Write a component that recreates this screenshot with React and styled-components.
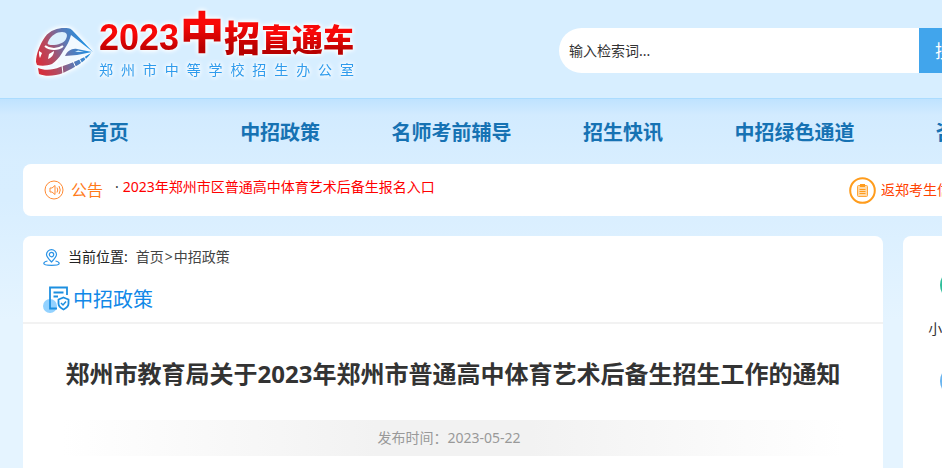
import React, { useState } from 'react';
import styled, { createGlobalStyle } from 'styled-components'

const navItems = ['首页', '中招政策', '名师考前辅导', '招生快讯', '中招绿色通道', '咨询台']

const services = [
    { name: '小学招生', color: '#2fbf9b' },
    { name: '初中', color: '#6ab5f0' },
]

const TrainIcon = () => (
    <svg width="58" height="52" viewBox="0 0 58 52" aria-hidden="true">
        <defs>
            <linearGradient id="train" gradientUnits="userSpaceOnUse" x1="2" y1="38" x2="50" y2="20">
                <stop offset="0" stopColor="#d62f3c" />
                <stop offset="0.3" stopColor="#b54a60" />
                <stop offset="0.65" stopColor="#5d78b4" />
                <stop offset="1" stopColor="#2590e0" />
            </linearGradient>
        </defs>
        <path d="M33 4L56 26L31 38L20 40Z" fill="#f2f9ff" />
        <path
            d="M0 36C0 28 4 18 9 11C14 4 22 2 28 2C31 2 34 2 36 4L57 26L35 9C33 17 29 22 26 27C23 32 20 35 16 38C11 40 5 40 1 39Z"
            fill="url(#train)"
        />
        <path d="M12 16C15 9 21 6 26 6C31 6 32 9 30 13C28 17 22 19 16 19C12 19 11 18 12 16Z" fill="#dceffd" />
        <path d="M9 20C14 24 22 24 27 20" fill="none" stroke="#fff" strokeWidth="2" />
        <path d="M3 25L6 27L4 32C3 30 3 28 3 25ZM13 28L18 25C18 29 15 32 12 33Z" fill="#fff" />
        <path d="M29 30C31 25 36 22 41 23L56 26L41 29Z" fill="url(#train)" />
        <path d="M39 26L48 26L42 24.500Z" fill="#d5ecfc" />
        <path d="M2 42C9 45 17 44 24 41C36 37 46 33 55 27C49 36 38 42 27 47C19 50 10 51 3 48Z" fill="url(#train)" />
        <path d="M26 39L27 48M37 35L40 42M43 32L46 38M48 30L50 34" stroke="#fff" strokeWidth="1" />
    </svg>
)

const SpeakerIcon = () => (
    <svg width="20" height="20" viewBox="0 0 20 20" fill="none" stroke="#ff8a33" aria-hidden="true">
        <circle cx="10" cy="10" r="9" />
        <path d="M6 8H8L11 5.500V14.500L8 12H6Z" />
        <path d="M13 7.500Q14.500 10 13 12.500M15 6Q17.500 10 15 14" />
    </svg>
)

const ClipboardIcon = () => (
    <svg width="27" height="27" viewBox="0 0 27 27" fill="none" aria-hidden="true">
        <circle cx="13.5" cy="13.5" r="12.3" stroke="#ff9c1c" strokeWidth="2" />
        <rect x="8.500" y="8.500" width="10" height="11" rx="1" fill="#ffd9a8" stroke="#ffa63a" />
        <rect x="11" y="7" width="5" height="3" fill="#ff9c1c" />
        <path d="M10.500 12.500H16.500M10.500 14.500H16.500M10.500 16.500H16.500" stroke="#ff9c1c" />
    </svg>
)

const PinIcon = () => (
    <svg width="17" height="17" viewBox="0 0 17 17" fill="none" stroke="#2b93e6" strokeWidth="1.2" aria-hidden="true">
        <path d="M8.500 13C5.500 10 3.500 8 3.500 5.600A5 5 0 0 1 13.500 5.600C13.500 8 11.500 10 8.500 13Z" />
        <circle cx="8.500" cy="5.600" r="2.200" />
        <path d="M4.500 12C2 12.500 0.800 13.500 0.800 14.500C0.800 16 4 16.300 8.500 16.300S16.200 16 16.200 14.500C16.200 13.500 15 12.500 12.500 12" />
    </svg>
)

const PolicyIcon = () => (
    <svg width="28" height="28" viewBox="0 0 28 28" fill="none" stroke="#1d8fe0" strokeWidth="1.800" aria-hidden="true">
        <circle cx="7" cy="20" r="7" fill="#93d2ff" stroke="none" />
        <path d="M14 22.500H7V1.500H24V9" />
        <path d="M10.500 6.500H20.500M10.500 10.500H15" />
        <path d="M20.500 11.500L25.500 13.500V17.500C25.500 20.500 23.500 22 20.500 23.500C17.500 22 15.500 20.500 15.500 17.500V13.500Z" />
        <path d="M18 17L20 19L23 15.500" strokeWidth="1.500" />
    </svg>
)

const App = () => {
    const [keyword, setKeyword] = useState('输入检索词...')

    return (
        <Page>
            <GlobalStyle />
            <Header>
                <Container>
                    <Brand href="#">
                        <TrainIcon />
                        <BrandWords>
                            <BrandTitle>
                                <Year>2023</Year>
                                <Brush><big>中</big>招</Brush>
                                <Express>直通车</Express>
                            </BrandTitle>
                            <BrandOffice>郑州市中等学校招生办公室</BrandOffice>
                        </BrandWords>
                    </Brand>
                    <SearchForm onSubmit={(e) => e.preventDefault()}>
                        <SearchInput
                            aria-label="输入检索词"
                            value={keyword}
                            onChange={(e) => setKeyword(e.target.value)}
                        />
                        <SearchButton type="submit">搜索</SearchButton>
                    </SearchForm>
                </Container>
            </Header>
            <NavBar>
                <NavList>
                    {navItems.map((item) => (
                        <NavLink href="#" key={item}>{item}</NavLink>
                    ))}
                </NavList>
            </NavBar>
            <Notice>
                <NoticeLabel><SpeakerIcon />公告</NoticeLabel>
                <NoticeItem>·<a href="#">2023年郑州市区普通高中体育艺术后备生报名入口</a></NoticeItem>
                <ReturnLink href="#"><ClipboardIcon />返郑考生信息</ReturnLink>
            </Notice>
            <Content>
                <Main>
                    <Breadcrumb>
                        <PinIcon />
                        <span>当前位置:</span>
                        <Trail><a href="#">首页</a>&gt;<a href="#">中招政策</a></Trail>
                    </Breadcrumb>
                    <SectionTitle><PolicyIcon />中招政策</SectionTitle>
                    <Article>
                        <h1>郑州市教育局关于2023年郑州市普通高中体育艺术后备生招生工作的通知</h1>
                        <Meta>发布时间：2023-05-22</Meta>
                    </Article>
                </Main>
                <Sidebar>
                    {services.map((item) => (
                        <Service href="#" key={item.name}>
                            <ServiceDot $color={item.color} />
                            {item.name}
                        </Service>
                    ))}
                </Sidebar>
            </Content>
        </Page>
    )
}

const GlobalStyle = createGlobalStyle`
    * {
        box-sizing: border-box;
    }

    body {
        margin: 0;
        font: 14px/20px "Noto Sans", "Noto Sans CJK SC", sans-serif;
        color: #333;
    }

    a {
        color: inherit;
        text-decoration: none;
    }
`

const Page = styled.div`
    display: flex;
    flex-direction: column;
    min-height: 100vh;
    overflow: hidden;
    background: linear-gradient(#d6edff, #d8eeff 200px, #e5f4ff 320px);
`

const Header = styled.header`
    height: 99px;
    padding: 0 23px;
    border-bottom: 1px solid #abdcff;
    background: #d7eeff;
`

const Container = styled.div`
    display: flex;
    min-width: 1200px;
    max-width: 1400px;
    margin: 0 auto;
`

const Brand = styled.a`
    display: flex;
    flex: 0 0 536px;
    gap: 5px;
    padding-left: 13px;
    filter: drop-shadow(0 0 2px #fff) drop-shadow(0 0 2px #fff);

    svg {
        margin-top: 26px;
    }
`

const BrandWords = styled.div`
    width: 255px;
`

const BrandTitle = styled.div`
    display: flex;
    justify-content: space-between;
    height: 60px;
    font-family: "Noto Sans CJK SC", sans-serif;
    font-weight: 900;
    white-space: nowrap;

    span {
        color: transparent;
        background: linear-gradient(#f80808 40%, #b80000 80%);
        background-clip: text;
    }
`

const Year = styled.span`
    margin-top: 16px;
    font: bold 36px/44px "Liberation Sans", sans-serif;
`

const Brush = styled.span`
    display: flex;
    align-items: flex-end;
    height: 60px;
    font-size: 36px;
    line-height: 48px;

    big {
        font-size: 44px;
        line-height: 60px;
    }
`

const Express = styled.span`
    margin-top: 16px;
    font-size: 31px;
    line-height: 44px;
`

const BrandOffice = styled.div`
    font-size: 14px;
    line-height: 20px;
    color: #2f9bec;
    text-align-last: justify;
`

const SearchForm = styled.form`
    display: flex;
    height: 45px;
    margin-top: 28px;
`

const SearchInput = styled.input`
    width: 360px;
    padding: 0 10px;
    border: 0;
    border-radius: 23px 0 0 23px;
    outline: none;
    background: #fff;
    color: #333;
    font: inherit;
`

const SearchButton = styled.button`
    padding: 0 16px;
    border: 0;
    background: #41a5ec;
    color: #fff;
    font: inherit;
    font-size: 18px;
    white-space: nowrap;
    cursor: pointer;
`

const NavBar = styled.nav`
    height: 65px;
    padding: 0 23px;
    background: linear-gradient(#bfe3ff, #d2ebff 16px, #d8eeff);
`

const NavList = styled.div`
    display: grid;
    grid-template-columns: repeat(7, 1fr);
    min-width: 1200px;
    max-width: 1400px;
    margin: 0 auto;
`

const NavLink = styled.a`
    text-align: center;
    font-size: 20px;
    line-height: 68px;
    font-weight: bold;
    color: #1672b3;
`

const Notice = styled(Container)`
    margin: 0 23px 20px;
    height: 52px;
    padding-left: 21px;
    border-radius: 8px;
    background: #fff;
    white-space: nowrap;
`

const NoticeLabel = styled.div`
    display: flex;
    align-items: center;
    gap: 7px;
    font-size: 16px;
    color: #ff7a1a;
`

const NoticeItem = styled.div`
    margin-left: 12px;
    line-height: 46px;

    a {
        margin-left: 4px;
        color: #f00;
    }
`

const ReturnLink = styled.a`
    display: flex;
    flex: 0 0 374px;
    align-items: center;
    gap: 5px;
    margin-left: auto;
    color: #ff4200;
`

const Content = styled(Container)`
    flex: 1;
    gap: 20px;
    margin: 0 23px;
`

const Main = styled.main`
    flex: 1;
    border-radius: 8px 8px 0 0;
    background: #fff;
`

const Breadcrumb = styled.div`
    display: flex;
    align-items: center;
    gap: 8px;
    height: 42px;
    padding: 0 20px;
    color: #222;
`

const Trail = styled.div`
    display: flex;
    gap: 1px;
    color: #444;
`

const SectionTitle = styled.h2`
    display: flex;
    align-items: center;
    gap: 2px;
    height: 46px;
    margin: 0;
    padding: 0 20px;
    border-bottom: 2px solid #f2f2f2;
    font-size: 20px;
    font-weight: normal;
    color: #1188e8;
`

const Article = styled.article`
    padding: 30px 40px;
    text-align: center;

    h1 {
        margin: 0 0 26px;
        font-size: 24px;
        line-height: 40px;
        white-space: nowrap;
    }
`

const Meta = styled.div`
    padding-right: 8px;
    line-height: 36px;
    color: #999;
    background: linear-gradient(90deg, #fff, #f2f2f2 40%, #f2f2f2 60%, #fff);
`

const Sidebar = styled.aside`
    display: grid;
    flex: 0 0 320px;
    grid-template-columns: repeat(3, 1fr);
    grid-auto-rows: 96px;
    padding-top: 33px;
    border-radius: 8px 8px 0 0;
    background: #fff;
`

const Service = styled.a`
    display: flex;
    flex-direction: column;
    align-items: center;
    gap: 18px;
    grid-column: 1;
`

const ServiceDot = styled.i`
    width: 32px;
    height: 32px;
    border-radius: 50%;
    background: ${(props) => props.$color};
`

export default App;
